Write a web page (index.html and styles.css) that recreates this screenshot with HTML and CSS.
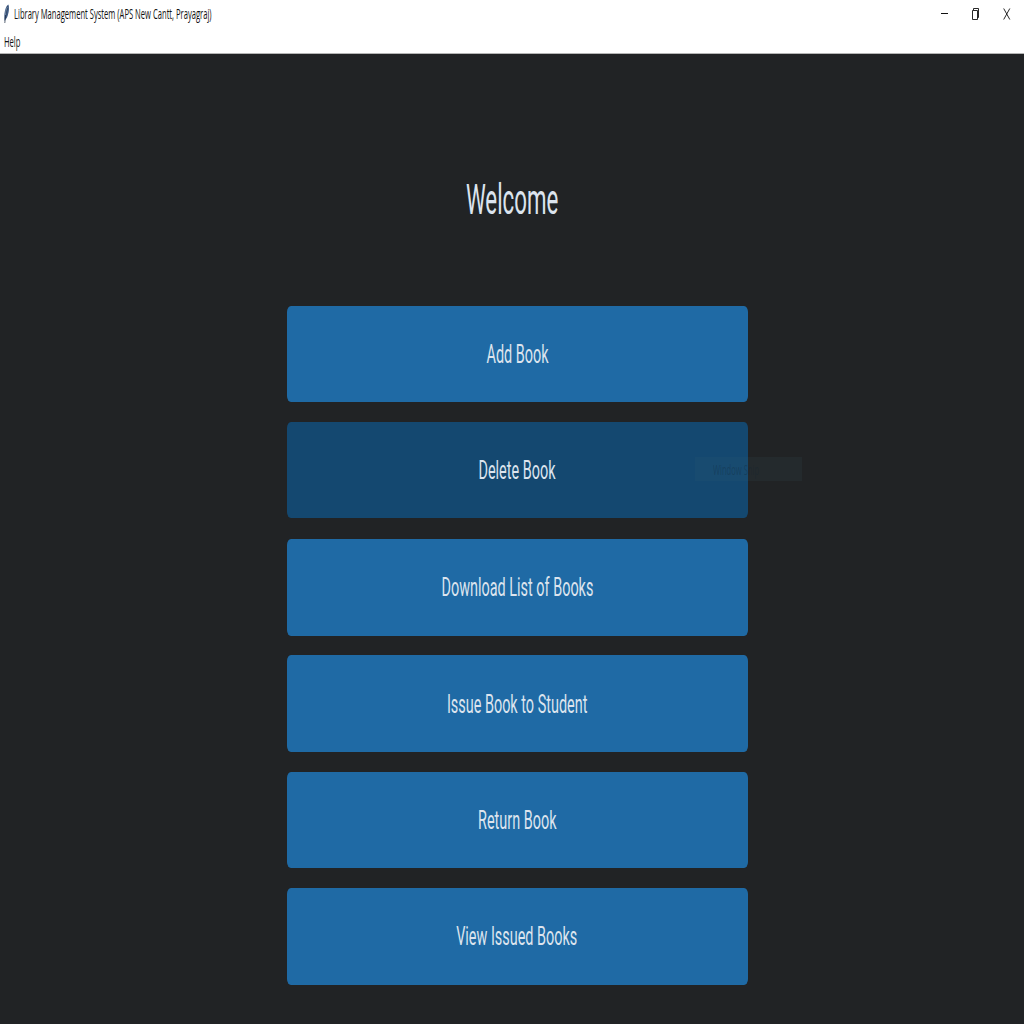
FILE: index.html
```html
<!DOCTYPE html>
<html lang="en">
<head>
<meta charset="utf-8">
<title>Library Management System</title>
<link rel="stylesheet" href="styles.css">
</head>
<body>
<header class="titlebar">
  <svg class="feather" width="8" height="20" viewBox="0 0 8 20"><path d="M1.500 17C.8 10 2 3 5.300 .6 6.500 3 6 9 4 13.500L2.300 16Z" fill="#3f5b84"/><path d="M1.800 19C2.300 13 3.200 7 4.800 2.500" fill="none" stroke="#18263c" stroke-width=".7"/><path d="M2.500 11C2.700 7 3.600 4 4.600 3" fill="none" stroke="#8aa0bd" stroke-width=".7"/></svg>
  <span class="caption">Library Management System (APS New Cantt, Prayagraj)</span>
  <svg class="controls" width="80" height="28" viewBox="0 0 80 28" fill="none" stroke="#111"><path d="M1 13.500H8"/><path d="M32.500 10.500H37.500V19.500H32.500ZM33.500 10V8.500H38.500V17.500H37.500" stroke-width=".9"/><path d="M63.700 8.500L69.800 19.500M69.800 8.500L63.700 19.500" stroke-width=".9"/></svg>
</header>
<nav class="menubar"><span class="menu-item">Help</span></nav>
<main class="content">
  <h1 class="heading"><span class="heading-text">Welcome</span></h1>
  <div class="actions">
    <button class="action"><span class="label">Add Book</span></button>
    <button class="action hovered"><span class="label">Delete Book</span><span class="ghost"><span class="ghost-text">Window Snip</span></span></button>
    <button class="action"><span class="label">Download List of Books</span></button>
    <button class="action"><span class="label">Issue Book to Student</span></button>
    <button class="action"><span class="label">Return Book</span></button>
    <button class="action"><span class="label">View Issued Books</span></button>
  </div>
</main>
</body>
</html>
```
FILE: styles.css
```css
* { box-sizing: border-box; }
body { margin: 0; height: 1024px; overflow: hidden; display: flex; flex-direction: column; background: #212325; }
.titlebar { height: 28px; flex: none; display: flex; align-items: center; background: #fff; padding-left: 3px; }
.feather { margin: -1px 3px 0 0; flex: none; }
.caption, .menu-item, .ghost-text { font: 14px/28px "Open Sans", sans-serif; color: #111; white-space: nowrap; display: inline-block; transform: scaleX(.543); transform-origin: left; }
.controls { margin-left: auto; margin-right: 4px; flex: none; }
.menubar { height: 26px; flex: none; background: #fff; border-bottom: 1px solid #b5b5b5; padding-left: 4px; }
.menu-item { line-height: 27px; }
.content { flex: 1; display: flex; flex-direction: column; align-items: center; }
.heading { margin: 121px 0 0; height: 131px; font: 42px/50px Roboto, sans-serif; color: #dce4ee; }
.heading-text { display: inline-block; transform: scaleX(.53); }
.actions { width: 461px; margin-left: 11px; display: grid; grid-template-rows: 96px 96px repeat(4, 97px); row-gap: 19.500px; }
.action { position: relative; border: 0; border-radius: 4px / 6px; padding: 0; background: #1f6aa5; color: #dce4ee; font: 26px/30px Roboto, sans-serif; }
.action:nth-child(-n+2) { margin-bottom: -1px; height: 96px; }
.actions { grid-template-rows: repeat(6, 96.900px); }
.hovered { background: #144870; }
.label { display: inline-block; white-space: nowrap; transform: translateX(-.4px) scaleX(.555); }
.ghost { position: absolute; left: 408px; top: 35px; width: 107px; height: 24px; background: rgba(70, 105, 120, .1); }
.ghost-text { position: absolute; left: 18px; top: 0; line-height: 25px; color: rgba(15, 35, 50, .3); }
```
